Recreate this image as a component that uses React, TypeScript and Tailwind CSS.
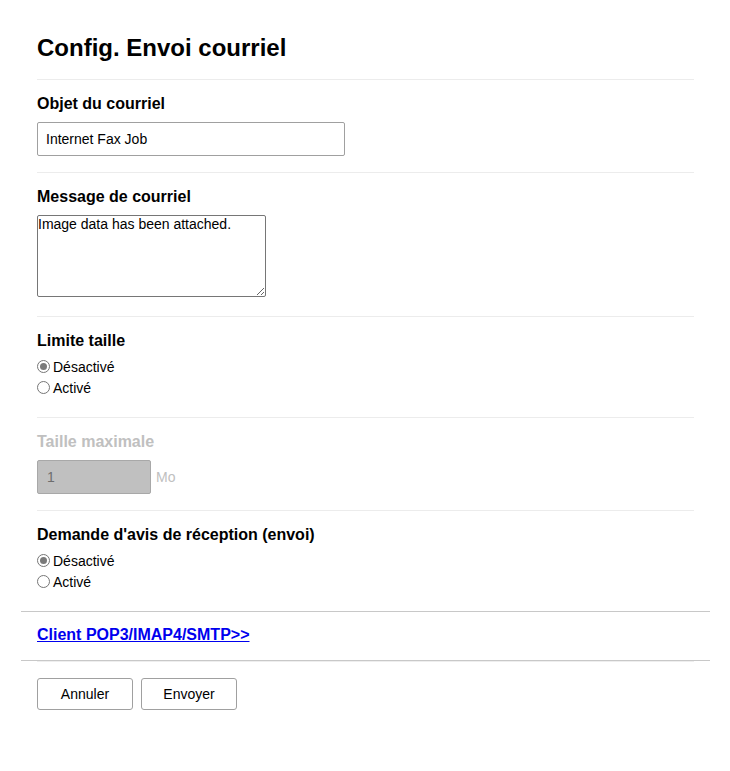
import React from "react";

function Radio({ checked, label }: { checked: boolean; label: string }) {
  return (
    <label className="flex h-[21px] items-center text-[14px] leading-[16px]">
      <span className="mr-[3px] flex h-[13px] w-[13px] items-center justify-center rounded-full border border-[#767676] bg-white">
        {checked && <span className="h-[7px] w-[7px] rounded-full bg-[#7a7a7a]" />}
      </span>
      <span>{label}</span>
    </label>
  );
}

function Label({ children, disabled }: { children: React.ReactNode; disabled?: boolean }) {
  return (
    <div className={`text-[16px] font-bold leading-[20px] ${disabled ? "text-[#c0c0c0]" : "text-black"}`}>
      {children}
    </div>
  );
}

export default function App() {
  return (
    <div className="min-h-[771px] bg-white font-['Liberation_Sans',Arial,sans-serif] text-black">
      <div className="ml-[21px] w-[689px]">
        <div className="px-4">
          <h1 className="pb-[17px] pt-[34px] text-[24px] font-bold leading-[28px]">Config. Envoi courriel</h1>

          <div className="border-t border-[#ececec] pb-[16px] pt-[14px]">
            <Label>Objet du courriel</Label>
            <input
              className="mt-2 box-border block h-[34px] w-[308px] rounded-[2px] border border-[#a0a0a0] px-2 text-[14px] text-black outline-none"
              defaultValue="Internet Fax Job"
            />
          </div>

          <div className="border-t border-[#ececec] pb-[19px] pt-[14px]">
            <Label>Message de courriel</Label>
            <textarea
              className="mt-2 box-border block h-[82px] w-[229px] resize rounded-[2px] border border-[#767676] px-0 py-0 text-[14px] leading-[16px] text-black outline-none"
              defaultValue="Image data has been attached."
            />
          </div>

          <div className="border-t border-[#ececec] pb-[19px] pt-[14px]">
            <Label>Limite taille</Label>
            <div className="mt-[5px]">
              <Radio checked label="Désactivé" />
              <Radio checked={false} label="Activé" />
            </div>
          </div>

          <div className="border-t border-[#ececec] pb-[16px] pt-[14px]">
            <Label disabled>Taille maximale</Label>
            <div className="mt-2 flex items-center">
              <input
                disabled
                className="box-border block h-[34px] w-[114px] rounded-[2px] border border-[#a8a8a8] bg-[#c0c0c0] px-[9px] text-[14px] text-[#6d6d6d] outline-none"
                defaultValue="1"
              />
              <span className="ml-[5px] text-[14px] text-[#c0c0c0]">Mo</span>
            </div>
          </div>

          <div className="border-t border-[#ececec] pb-[19px] pt-[14px]">
            <Label>Demande d'avis de réception (envoi)</Label>
            <div className="mt-[5px]">
              <Radio checked label="Désactivé" />
              <Radio checked={false} label="Activé" />
            </div>
          </div>
        </div>

        <div className="border-t border-[#c8c8c8] px-4 pb-[15px] pt-[13px] text-[16px] leading-[20px]">
          <a href="#" className="font-bold text-[#0000ee] underline">
            Client POP3/IMAP4/SMTP&gt;&gt;
          </a>
        </div>

        <div className="border-t border-[#c8c8c8]">
          <div className="mx-4 border-t border-[#eeeeee]" />
          <div className="flex gap-2 px-4 pt-[16px]">
            <button className="h-[32px] w-[96px] rounded-[3px] border border-[#a0a0a0] bg-white text-[14px] text-black">
              Annuler
            </button>
            <button className="h-[32px] w-[96px] rounded-[3px] border border-[#a0a0a0] bg-white text-[14px] text-black">
              Envoyer
            </button>
          </div>
        </div>
      </div>
    </div>
  );
}
